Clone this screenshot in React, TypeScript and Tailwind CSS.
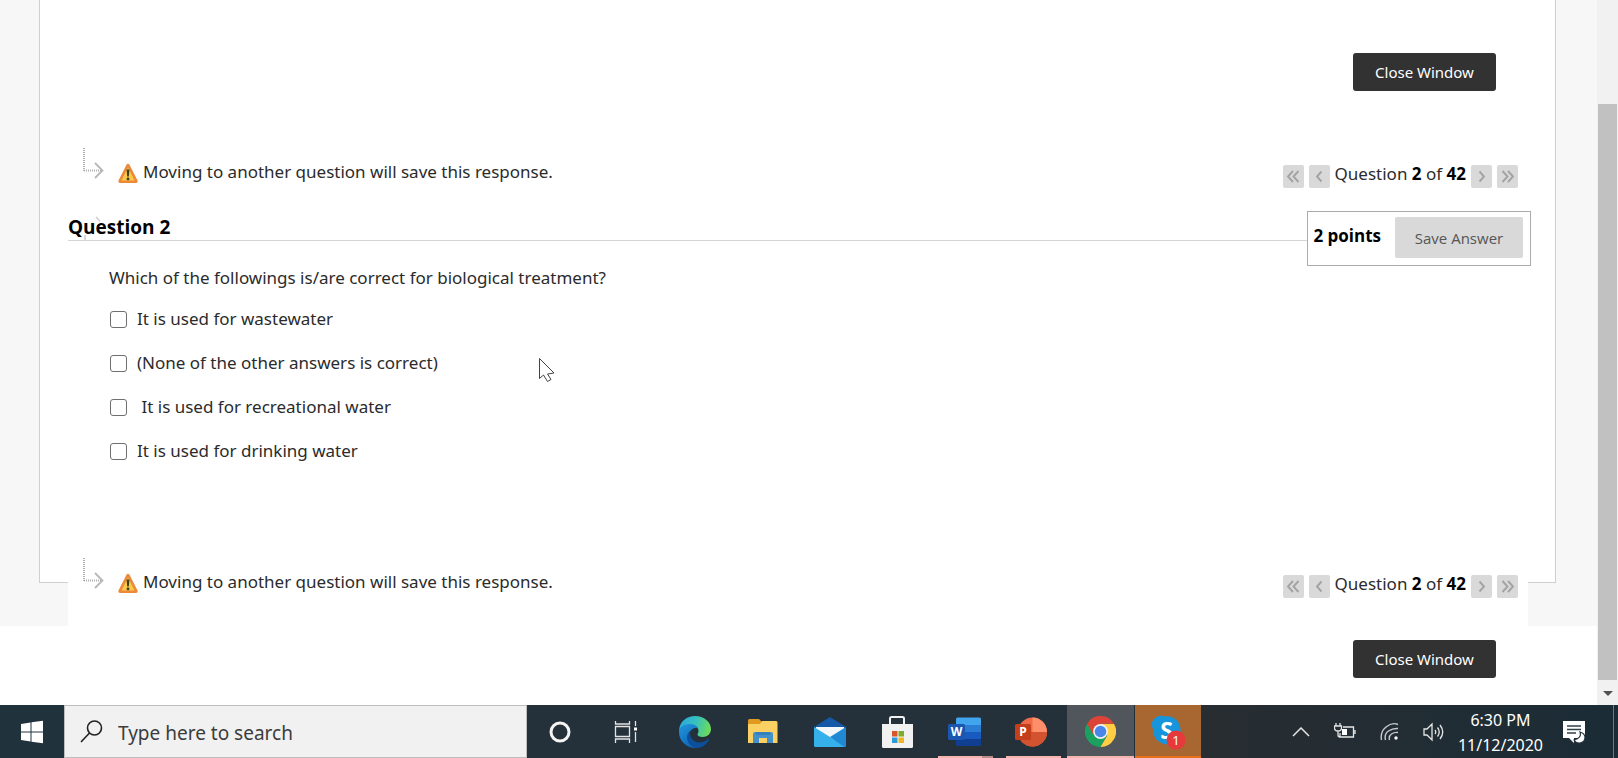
import type { ReactNode } from 'react';

const options = [
  { id: 'wastewater', label: 'It is used for wastewater' },
  { id: 'none', label: '(None of the other answers is correct)' },
  { id: 'recreational', label: '\u00a0It is used for recreational water' },
  { id: 'drinking', label: 'It is used for drinking water' },
];

function PointerArrow() {
  return (
    <svg width="22" height="32" viewBox="0 0 22 32" fill="none" aria-hidden="true">
      <path d="M2 0V23" stroke="#b0b0b0" strokeWidth="2" strokeDasharray="1 1" />
      <path d="M2 22.500H20" stroke="#b0b0b0" strokeWidth="2" strokeDasharray="1 1" />
      <path d="M13 15L20.500 22.500L13 30" stroke="#b8b8b8" strokeWidth="1.800" />
    </svg>
  );
}

function WarningIcon() {
  return (
    <svg width="20" height="21" viewBox="0 0 20 21" aria-hidden="true">
      <path d="M10 2.500L18 18.200H2Z" fill="#f6b73c" stroke="#ec8a3c" strokeWidth="3.400" strokeLinejoin="round" />
      <path d="M10 4.500L16.500 17.500H3.500Z" fill="#fbc84a" />
      <path d="M8.600 6.500h2.800l-.6 7H9.200z" fill="#38401c" />
      <rect x="8.700" y="14.600" width="2.600" height="2.600" rx="1" fill="#38401c" />
    </svg>
  );
}

function PageButton({ label, path }: { label: string; path: string }) {
  return (
    <button type="button" aria-label={label} className="flex h-[23px] w-[21px] items-center justify-center rounded-[2px] bg-[#d9d9d9]">
      <svg width="15" height="15" viewBox="0 0 15 15" fill="none" stroke="#a3a3a3" strokeWidth="1.900">
        <path d={path} />
      </svg>
    </button>
  );
}

function QuestionNav() {
  return (
    <div className="flex h-10 justify-between font-['Noto_Sans',sans-serif]">
      <div className="flex">
        <PointerArrow />
        <div className="ml-[14px] flex items-start pt-3">
          <div className="pt-[3px]"><WarningIcon /></div>
          <p className="ml-[5px] text-[17px] leading-6">Moving to another question will save this response.</p>
        </div>
      </div>
      <div className="flex items-start gap-[5px] pt-[17px]">
        <PageButton label="First question" path="M7 2L2 7.500L7 13M12.500 2L7.500 7.500L12.500 13" />
        <PageButton label="Previous question" path="M9.500 2.500L5 7.500L9.500 12.500" />
        <p className="-mt-[3px] text-[17px] leading-6">
          Question <b className="text-black">2</b> of <b className="text-black">42</b>
        </p>
        <PageButton label="Next question" path="M5.500 2.500L10 7.500L5.500 12.500" />
        <PageButton label="Last question" path="M2.500 2L7.500 7.500L2.500 13M8 2L13 7.500L8 13" />
      </div>
    </div>
  );
}

function CloseButton() {
  return (
    <button type="button" className="h-[38px] w-[143px] rounded-[3px] bg-[#323232] font-['Noto_Sans',sans-serif] text-[15px] leading-5 text-white">
      Close Window
    </button>
  );
}

function TaskButton({ label, className = '', children }: { label: string; className?: string; children: ReactNode }) {
  return (
    <button type="button" aria-label={label} className={`relative mr-px flex h-[53px] items-center justify-center ${className}`}>
      {children}
    </button>
  );
}

function EdgeIcon() {
  return (
    <svg width="34" height="34" viewBox="0 0 34 34" aria-hidden="true">
      <defs>
        <linearGradient id="edgeTop" x1="0" y1="0.300" x2="1" y2="0.500">
          <stop offset="0" stopColor="#2ea8dc" />
          <stop offset="0.500" stopColor="#35c1c0" />
          <stop offset="1" stopColor="#6fdc56" />
        </linearGradient>
        <linearGradient id="edgeLeft" x1="0" y1="0" x2="0.500" y2="1">
          <stop offset="0" stopColor="#2196dc" />
          <stop offset="1" stopColor="#1168b8" />
        </linearGradient>
      </defs>
      <path d="M1 15C2 6 9 1 17 1c9 0 16 6 16 13 0 5-4 8-8.500 8-3 0-5-1-5-2.500 0-1 1-1.500 1-3.500 0-3.500-3.500-6-8-6C7 10 3 12 1 15z" fill="url(#edgeTop)" />
      <path d="M1 15c2-4 6-6 11-6 4 0 7 2 8 4-4-1-9 2-9 8 0 6 4 10 9 12C10 34 1 27 1 17z" fill="url(#edgeLeft)" />
      <path d="M12.500 15.500c-2 5 2 12 9 12 4 0 7-2 8.500-3.500.8-.6 1.500 0 1 .8C28 30 24 33 19 33 12 32 9 27 9 22c0-3 1.500-5 3.500-6.500z" fill="#0c4f9c" />
    </svg>
  );
}

function ExplorerIcon() {
  return (
    <svg width="30" height="25" viewBox="0 0 30 25" aria-hidden="true">
      <path d="M0 1.500Q0 0 1.500 0H11l3 3v3H0z" fill="#e09a20" />
      <path d="M0 5h12l2-3h14q1.500 0 1.500 1.500V24H0z" fill="#fbd163" />
      <path d="M5 24v-9q0-2 2-2h16q2 0 2 2v9h-6v-5h-8v5z" fill="#4490c8" />
      <path d="M8 13h14v3H8z" fill="#3480bc" />
    </svg>
  );
}

function MailIcon() {
  return (
    <svg width="34" height="32" viewBox="0 0 34 32" aria-hidden="true">
      <path d="M1 11L17 1l16 10v7H1z" fill="#1558a5" />
      <path d="M3 11h28v9L17 25 3 20z" fill="#f3f7fa" />
      <path d="M1 11l16 10 16 10H2.500Q1 31 1 29.500z" fill="#35b0ea" />
      <path d="M33 11v18.500q0 1.500-1.500 1.500L17 21z" fill="#2189d4" />
    </svg>
  );
}

function StoreIcon() {
  return (
    <svg width="33" height="34" viewBox="0 0 33 34" aria-hidden="true">
      <path d="M9 10V3.500Q9 2 10.500 2h11Q23 2 23 3.500V10" fill="none" stroke="#f2f2f2" strokeWidth="2" />
      <path d="M1 9h31v22.500q0 1.500-1.500 1.500h-28Q1 33 1 31.500z" fill="#f1f1f1" />
      <path d="M11 16h5.500v5.500H11z" fill="#d8542a" />
      <path d="M17.500 16H23v5.500h-5.500z" fill="#7ead2b" />
      <path d="M11 22.500h5.500V28H11z" fill="#2c9bd8" />
      <path d="M17.500 22.500H23V28h-5.500z" fill="#f0b524" />
    </svg>
  );
}

function WordIcon() {
  return (
    <svg width="34" height="30" viewBox="0 0 34 30" aria-hidden="true">
      <path d="M8 2q0-1.500 1.500-1.500h22Q33 .5 33 2v6H8z" fill="#41a5ee" />
      <path d="M8 8h25v7H8z" fill="#2b7cd3" />
      <path d="M8 15h25v7H8z" fill="#185abd" />
      <path d="M8 22h25v5.500q0 1.500-1.500 1.500h-22Q8 29 8 27.500z" fill="#103f91" />
      <rect x="0" y="7" width="17" height="16" rx="1.500" fill="#1b56b0" />
      <text x="8.500" y="19" textAnchor="middle" fontSize="12" fontWeight="700" fill="#fff">W</text>
    </svg>
  );
}

function PowerPointIcon() {
  return (
    <svg width="34" height="30" viewBox="0 0 34 30" aria-hidden="true">
      <circle cx="18.500" cy="15" r="14.500" fill="#ed6c47" />
      <path d="M18.500.5A14.500 14.500 0 0 1 33 15H18.500z" fill="#ff8f6b" />
      <path d="M4 15h29a14.500 14.500 0 0 1-29 0z" fill="#d35230" />
      <rect x="1" y="7" width="16" height="16" rx="1.500" fill="#c43e1c" />
      <text x="9" y="19" textAnchor="middle" fontSize="12" fontWeight="700" fill="#fff">P</text>
    </svg>
  );
}

function ChromeIcon() {
  return (
    <svg width="31" height="31" viewBox="0 0 48 48" aria-hidden="true">
      <path d="M24 24h-2L3.200 12A24 24 0 0 0 24 48l10-18z" fill="#1ba15f" />
      <path d="M24 12h20.800A24 24 0 0 1 24 48l10.400-18z" fill="#ffce44" />
      <path d="M24 12h20.800A24 24 0 0 0 3.200 12l10.400 18z" fill="#dc4437" />
      <circle cx="24" cy="24" r="11.500" fill="#f1f1f1" />
      <circle cx="24" cy="24" r="9" fill="#4a86ea" />
    </svg>
  );
}

function SkypeIcon() {
  return (
    <svg width="36" height="36" viewBox="0 0 36 36" aria-hidden="true">
      <path d="M9 2c2-.6 4-.2 5.500.5C23 1 31 7 30.500 17c2 5 0 12-7 13C11 33 2 24 3 15 0 9 3 4 9 2z" fill="#1695dc" />
      <text x="16.500" y="25" textAnchor="middle" fontSize="23" fontWeight="700" fill="#fff">S</text>
      <circle cx="26" cy="26" r="9.500" fill="#e5393c" />
      <text x="26" y="31" textAnchor="middle" fontSize="13" fill="#fff">1</text>
    </svg>
  );
}

function Taskbar() {
  return (
    <footer className="flex h-[53px] bg-[#24313a] font-['Noto_Sans',sans-serif] text-white">
      <button type="button" aria-label="Start" className="flex w-16 items-center justify-center bg-[#20323c]">
        <svg width="24" height="24" viewBox="0 0 24 24" fill="#fff" aria-hidden="true">
          <path d="M1 4l9.500-1.500v9H1zM11.500 2.300L23 .7v10.800H11.500zM1 12.500h9.500v9L1 20zM11.500 12.500H23v10.800l-11.500-1.600z" />
        </svg>
      </button>
      <label className="flex w-[463px] items-center border border-[#bdbdbd] bg-[#f1f1f1] pl-[15px]">
        <svg width="23" height="23" viewBox="0 0 23 23" fill="none" stroke="#222" strokeWidth="1.600" aria-hidden="true">
          <circle cx="14.500" cy="8" r="7" />
          <path d="M9.500 13L1 22" />
        </svg>
        <input
          type="text"
          aria-label="Search"
          placeholder="Type here to search"
          className="ml-[15px] min-w-0 flex-1 bg-transparent pt-[3px] text-[19px] leading-6 outline-none placeholder:text-[#3c3c3c]"
        />
      </label>
      <div className="grid w-[675px] grid-cols-10">
        <TaskButton label="Cortana">
          <svg width="24" height="24" viewBox="0 0 24 24" fill="none" stroke="#f4f4f4" strokeWidth="3" aria-hidden="true">
            <circle cx="12" cy="12" r="9" />
          </svg>
        </TaskButton>
        <TaskButton label="Task view" className="pr-1">
          <svg width="24" height="24" viewBox="0 0 24 24" fill="none" stroke="#e4e4e4" strokeWidth="1.300" aria-hidden="true">
            <path d="M1.500 1v3h14V1M1.500 23v-4h14v4M1.500 6.500h14v10h-14zM21.500 1v5M21.500 12v10" />
            <path d="M20 7.500h3v3h-3z" fill="#fff" stroke="none" />
          </svg>
        </TaskButton>
        <TaskButton label="Edge"><EdgeIcon /></TaskButton>
        <TaskButton label="File Explorer"><ExplorerIcon /></TaskButton>
        <TaskButton label="Mail"><MailIcon /></TaskButton>
        <TaskButton label="Microsoft Store"><StoreIcon /></TaskButton>
        <TaskButton label="Word">
          <WordIcon />
          <span className="absolute bottom-0 left-[6px] flex h-[2px] w-[55px]">
            <span className="flex-1 bg-[#f3b5ad]" />
            <span className="w-[11px] bg-[#b98d8a]" />
          </span>
        </TaskButton>
        <TaskButton label="PowerPoint" className="pr-1">
          <PowerPointIcon />
          <span className="absolute bottom-0 left-[6px] h-[2px] w-[55px] bg-[#f3b5ad]" />
        </TaskButton>
        <TaskButton label="Chrome" className="bg-[#50565b]">
          <ChromeIcon />
          <span className="absolute inset-x-0 bottom-0 h-[2px] bg-[#f3b5ad]" />
        </TaskButton>
        <TaskButton label="Skype" className="bg-[#a86731]">
          <SkypeIcon />
          <span className="absolute inset-x-0 bottom-0 h-[2px] bg-[#e8701a]" />
        </TaskButton>
      </div>
      <div className="flex flex-1 items-center justify-end bg-linear-to-r from-[#282d31] to-[#1b2c36]">
        <button type="button" aria-label="Show hidden icons" className="mr-6">
          <svg width="18" height="10" viewBox="0 0 18 10" fill="none" stroke="#e6e6e6" strokeWidth="1.500"><path d="M1 9l8-8 8 8" /></svg>
        </button>
        <svg className="mr-6" width="22" height="18" viewBox="0 0 22 18" fill="none" stroke="#e6e6e6" strokeWidth="1.300" aria-hidden="true">
          <path d="M9 4h10.500v10H6v-4M21 7v4M2 0v3M6 0v3M.5 3h7v2q0 3-3.500 3T.5 5zM4 8v4q0 2 2 2" />
          <path d="M8 6h5v6H8z" fill="#fff" stroke="none" />
        </svg>
        <svg className="mr-6" width="19" height="19" viewBox="0 0 19 19" fill="none" stroke="#c9cdd0" strokeWidth="1.400" aria-hidden="true">
          <path d="M1.500 18Q0 10 6 5T18 2.500M5.500 18Q4 12 8.500 9T18 6.500M9.500 18Q8.500 14 11.500 12T18 10.500" />
          <circle cx="16" cy="16" r="1.700" fill="#fff" stroke="none" />
        </svg>
        <svg className="mr-[14px]" width="21" height="20" viewBox="0 0 21 20" fill="none" stroke="#e6e6e6" strokeWidth="1.300" aria-hidden="true">
          <path d="M1 7h3l5-5v16l-5-5H1zM12 8q1.500 2 0 4M14.500 5.500q3.500 4.500 0 9M17 3q5.500 7 0 14" />
        </svg>
        <div className="pt-[2px] text-center text-[16px] leading-[25px]">
          <p>6:30 PM</p>
          <p>11/12/2020</p>
        </div>
        <button type="button" aria-label="Notifications" className="mr-[27px] ml-5 pt-[2px]">
          <svg width="23" height="23" viewBox="0 0 23 23" aria-hidden="true">
            <path d="M0 0h22v17H11v5l-5-5H0z" fill="#fff" />
            <path d="M4 5h14M4 8.500h14M4 12h9" stroke="#33414a" strokeWidth="1.300" />
            <path d="M17 11q2 6-6 8 2 3.500 6 3 5-1 5-5.500 0-4-5-5.500z" fill="#fff" stroke="#24313a" strokeWidth="1.200" />
          </svg>
        </button>
        <div className="mr-1 h-full w-px bg-[#6d777d]" />
      </div>
    </footer>
  );
}

export default function App() {
  return (
    <div className="relative flex min-h-screen flex-col bg-white font-['Open_Sans',sans-serif] text-[#2b2b2b]">
      <div className="flex flex-1">
        <main className="flex-1 pb-[27px]">
          <div className="bg-[#f7f7f7] pr-[41px] pl-[39px]">
            <section className="border-x border-b border-[#cfcfcf] bg-white pr-6 pb-[109px] pl-7">
              <div className="flex justify-end pt-[53px] pr-[35px]">
                <CloseButton />
              </div>
              <div className="mt-[57px] pr-[13px] pl-[14px]">
                <QuestionNav />
              </div>
              <div className="mt-[23px] flex items-start">
                <div className="relative h-[30px] flex-1 border-b border-[#d5d5d5]">
                  <svg className="absolute top-0 left-3" width="20" height="30" viewBox="0 0 20 30" fill="none" stroke="#cccccc" aria-hidden="true">
                    <path d="M16 6l5 5M5 24v6" strokeWidth="1.500" />
                  </svg>
                  <h1 className="relative text-[19px] leading-8 font-bold text-black">Question 2</h1>
                </div>
                <div className="flex h-[55px] items-start border border-[#ababab] p-[5px] pr-[7px]">
                  <p className="mr-[14px] pt-[7px] text-[17px] leading-6 font-bold text-black">2 points</p>
                  <button type="button" className="h-[41px] w-32 rounded-[2px] bg-[#d9d9d9] text-[15px] leading-5 text-[#555]">
                    Save Answer
                  </button>
                </div>
              </div>
              <form className="pl-[41px] font-['Noto_Sans',sans-serif] text-[17px] leading-6">
                <p className="mb-[7px]">Which of the followings is/are correct for biological treatment?</p>
                {options.map((option) => (
                  <div key={option.id} className="flex h-11 items-center">
                    <input
                      id={option.id}
                      type="checkbox"
                      className="mr-[10px] ml-px size-[17px] appearance-none rounded-[3px] border border-[#6f6f6f] bg-white checked:bg-[#3b82f6]"
                    />
                    <label htmlFor={option.id}>{option.label}</label>
                  </div>
                ))}
              </form>
            </section>
            <section className="relative mr-[28px] ml-[29px] -mt-[25px] bg-white pr-[10px] pb-[28px] pl-[14px]">
              <QuestionNav />
            </section>
          </div>
          <div className="mt-[14px] flex justify-end pr-[101px]">
            <CloseButton />
          </div>
        </main>
        <div className="flex w-[21px] flex-col items-center bg-[#f1f1f1] pt-[104px]">
          <div className="w-[19px] flex-1 bg-[#c1c1c1]" />
          <svg width="21" height="25" viewBox="0 0 21 25" aria-hidden="true">
            <path d="M6 11h10l-5 5z" fill="#505050" />
          </svg>
        </div>
      </div>
      <Taskbar />
      <svg className="absolute top-[357px] left-[538px]" width="18" height="27" viewBox="0 0 18 27" aria-hidden="true">
        <path d="M1.500 1.500v20l4-3.500 4 6.500 3.500-2-3.500-5.500 6.500-1z" fill="#fff" stroke="#444" strokeWidth="1" />
      </svg>
    </div>
  );
}
